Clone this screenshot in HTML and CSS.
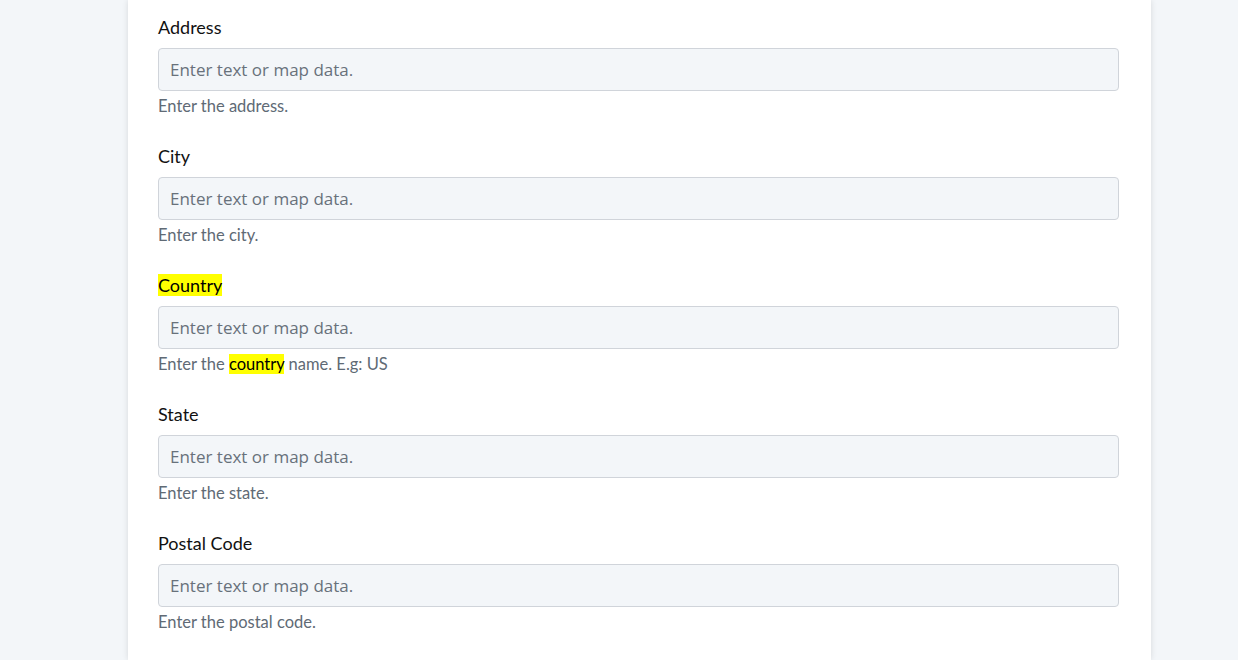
FILE: index.html
```html
<!DOCTYPE html>
<html lang="en">
<head>
<meta charset="utf-8">
<title>Location form</title>
<link rel="stylesheet" href="styles.css">
</head>
<body>
<main class="card">
  <div class="field">
    <label class="field-label">Address</label>
    <input class="field-input" type="text" placeholder="Enter text or map data.">
    <p class="field-help">Enter the address.</p>
  </div>
  <div class="field">
    <label class="field-label">City</label>
    <input class="field-input" type="text" placeholder="Enter text or map data.">
    <p class="field-help">Enter the city.</p>
  </div>
  <div class="field">
    <label class="field-label"><mark class="hl">Country</mark></label>
    <input class="field-input" type="text" placeholder="Enter text or map data.">
    <p class="field-help">Enter the <mark class="hl">country</mark> name. E.g: US</p>
  </div>
  <div class="field">
    <label class="field-label">State</label>
    <input class="field-input" type="text" placeholder="Enter text or map data.">
    <p class="field-help">Enter the state.</p>
  </div>
  <div class="field">
    <label class="field-label">Postal Code</label>
    <input class="field-input" type="text" placeholder="Enter text or map data.">
    <p class="field-help">Enter the postal code.</p>
  </div>
</main>
</body>
</html>
```

FILE: styles.css
```css
html, body {
  margin: 0;
  padding: 0;
  height: 100%;
}

body {
  background: #f3f6f9;
  font-family: Lato, "Open Sans", sans-serif;
  padding-left: 128px;
  box-sizing: border-box;
  overflow: hidden;
}

.card {
  width: 1023px;
  min-height: 100%;
  background: #ffffff;
  box-shadow: 0 0 6px rgba(0, 0, 0, 0.12);
  padding: 15px 30px 0 30px;
  box-sizing: border-box;
  display: flex;
  flex-direction: column;
}

.field {
  display: flex;
  flex-direction: column;
  margin-bottom: 27px;
}

.field-label {
  font-size: 18px;
  line-height: 24px;
  color: #111;
  margin-bottom: 9px;
  align-self: flex-start;
}

.field-input {
  box-sizing: border-box;
  width: 961px;
  height: 43px;
  padding: 0 11px;
  background: #f3f6f9;
  border: 1px solid #d0d4da;
  border-radius: 4px;
  font-family: "Open Sans", sans-serif;
  font-size: 17px;
  color: #333;
  outline: none;
}

.field-input::placeholder {
  color: #68717b;
}

.field-help {
  margin: 5px 0 0 0;
  font-size: 16.5px;
  line-height: 21px;
  color: #606a75;
}

.hl {
  background: #ffff00;
  color: #000;
  padding: 0;
}
```
